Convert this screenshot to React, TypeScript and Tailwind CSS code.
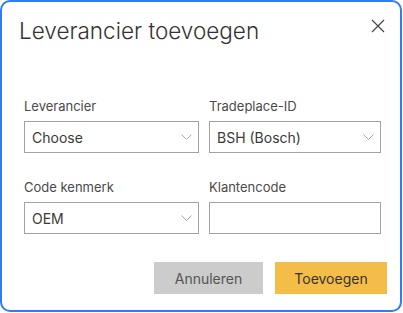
import React from "react";

const font = { fontFamily: "Inter, 'Noto Sans', sans-serif" };

function Chevron() {
  return (
    <svg width="11" height="6" viewBox="0 0 11 6" fill="none" className="shrink-0">
      <path d="M0.5 0.5 L5.5 5.5 L10.5 0.5" stroke="#a8a8a8" strokeWidth="1" />
    </svg>
  );
}

function SelectBox({ value, width }: { value: string; width: string }) {
  return (
    <div
      className={`${width} h-[32px] border border-[#a3a3a3] flex items-center justify-between pl-[7px] pr-[6px] text-[14px] text-[#3a3a3a]`}
    >
      <span>{value}</span>
      <Chevron />
    </div>
  );
}

function Field({ label, children }: { label: string; children: React.ReactNode }) {
  return (
    <div className="flex flex-col">
      <div className="text-[13px] leading-[16px] text-[#4a4a4a] mb-[7px]">{label}</div>
      {children}
    </div>
  );
}

export default function App() {
  return (
    <div className="w-[403px] h-[313px] bg-white" style={font}>
      <div className="w-[402px] h-[312px] border-2 border-[#2f7df6] rounded-[10px] bg-white flex flex-col">
        {/* Header */}
        <div className="flex items-start justify-between pl-[17px] pr-[15px] pt-[14px]">
          <h1 className="text-[22.5px] leading-[30px] font-light text-[#333333]">Leverancier toevoegen</h1>
          <svg width="14" height="14" viewBox="0 0 14 14" className="mt-[3px]">
            <path d="M1 1 L13 13 M13 1 L1 13" stroke="#444444" strokeWidth="1.2" />
          </svg>
        </div>

        {/* Body */}
        <div className="pl-[22px] mt-[52px] flex flex-col gap-[26px]">
          <div className="flex gap-[10px]">
            <Field label="Leverancier">
              <SelectBox value="Choose" width="w-[175px]" />
            </Field>
            <Field label="Tradeplace-ID">
              <SelectBox value="BSH (Bosch)" width="w-[172px]" />
            </Field>
          </div>
          <div className="flex gap-[10px]">
            <Field label="Code kenmerk">
              <SelectBox value="OEM" width="w-[175px]" />
            </Field>
            <Field label="Klantencode">
              <div className="w-[172px] h-[32px] border border-[#a3a3a3]" />
            </Field>
          </div>
        </div>

        {/* Footer */}
        <div className="flex justify-end gap-[12px] pr-[13px] mt-[28px]">
          <button className="w-[109px] h-[32px] bg-[#cccccc] text-[14px] text-[#555555]">Annuleren</button>
          <button className="w-[112px] h-[32px] bg-[#f4bd47] text-[14px] text-[#333333]">Toevoegen</button>
        </div>
      </div>
    </div>
  );
}
